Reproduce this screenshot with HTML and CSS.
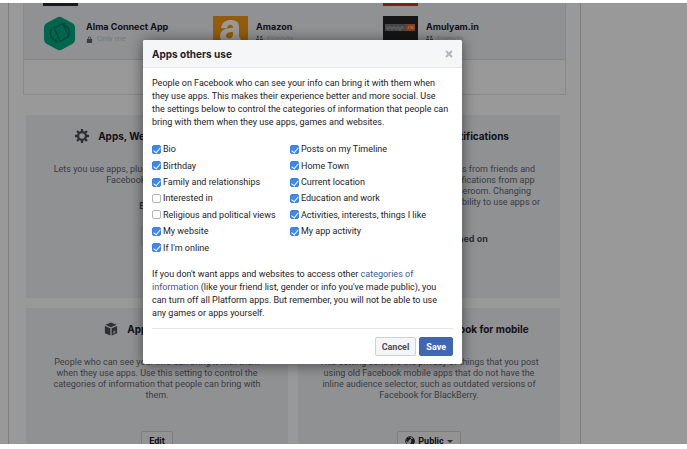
FILE: index.html
```
<!DOCTYPE html>
<html lang="en">
<head>
    <meta charset="utf-8">
    <title>App Settings</title>
    <link rel="stylesheet" href="styles.css">
</head>
<body>
    <div class="screen">
        <main class="page">
            <section class="panel">
                <div class="apps">
                    <div class="app"><span class="thumb dark"></span></div>
                    <div class="app"></div>
                    <div class="app"><span class="thumb red"></span></div>
                    <div class="app">
                        <svg class="thumb" viewBox="0 0 35 36">
                            <path d="M14 1.5Q16.500 0 19 1.500L30 7.500Q32.500 9 32.500 12V24Q32.500 27 30 28.500L19 34.500Q16.500 36 14 34.500L3 28.500Q.5 27 .5 24V12Q.5 9 3 7.500Z" fill="#00a880"/>
                            <g fill="none" stroke="#087563" stroke-width="1.300" stroke-linejoin="round">
                                <path d="M11 12l9-4 6 13-9 5z"/>
                                <path d="M8 13c-2 4-1 9 3 12l3 1M12 24l2 2-2 2M25 22c3-4 2-9-2-12l-2-1M22 7l-2 2 2 2"/>
                            </g>
                        </svg>
                        <div>
                            <a class="app-name" href="#">Alma Connect App</a>
                            <div class="audience">
                                <svg class="small-icon" viewBox="0 0 8 8"><path d="M1 3.500h6V8H1zM2 4V2.500a2 2 0 0 1 4 0V4H5V2.500a1 1 0 0 0-2 0V4z" fill="#62666f"/></svg>
                                Only me
                            </div>
                        </div>
                    </div>
                    <div class="app">
                        <svg class="thumb" viewBox="0 0 35 35">
                            <path d="M0 0h35v35H0z" fill="#f59a12"/>
                            <path d="M8 12c1-6 5-8 10-8 6 0 8 3 8 7v8c0 3 1 3 2 4l-4 4-3-3c-5 5-14 3-14-4 0-6 6-8 13-8 0-5-6-4-6 .5z" fill="#fff"/>
                            <path d="M20 16c-5 0-7 1-7 4s6 4 7-1z" fill="#f59a12"/>
                            <path d="M6 28q11 6 22 0" fill="none" stroke="#fff" stroke-width="2"/>
                        </svg>
                        <div>
                            <a class="app-name" href="#">Amazon</a>
                            <div class="audience">
                                <svg class="small-icon" viewBox="0 0 8 8"><path d="M1 0h2v2H1zM5 0h2v2H5zM0 3h3.500v3H3v2H1V6H0zM4.500 3H8v3H7v2H5V6h-.5z" fill="#62666f"/></svg>
                                Friends
                            </div>
                        </div>
                    </div>
                    <div class="app">
                        <svg class="thumb" viewBox="0 0 35 35">
                            <path d="M0 0h35v35H0z" fill="#262626"/>
                            <path d="M2 8h21v7H2z" fill="#77777a"/>
                            <path d="M4 10v3h2v-2h2v2h2v-2h2v2h2v-2h2v3h2v-3h2v2" fill="none" stroke="#aaa"/>
                            <path d="M23 8h9v7h-9z" fill="#e06a2c"/>
                            <path d="M25 13l1-3M28 13v-3l2 3v-3" fill="none" stroke="#ffc19a"/>
                        </svg>
                        <div>
                            <a class="app-name" href="#">Amulyam.in</a>
                            <div class="audience">
                                <svg class="small-icon" viewBox="0 0 8 8"><path d="M1 0h2v2H1zM5 0h2v2H5zM0 3h3.500v3H3v2H1V6H0zM4.500 3H8v3H7v2H5V6h-.5z" fill="#62666f"/></svg>
                                Friends
                            </div>
                        </div>
                    </div>
                </div>
                <div class="show-all"></div>
            </section>

            <section class="cards">
                <article class="card">
                    <h3>
                        <svg class="card-icon" viewBox="0 0 16 16">
                            <path d="M8 0v16M0 8h16M2.300 2.300l11.400 11.400M13.700 2.300L2.300 13.700" stroke="#4b4f56" stroke-width="2.600"/>
                            <circle cx="8" cy="8" r="4.500" fill="#f1f2f5" stroke="#4b4f56" stroke-width="2.600"/>
                        </svg>
                        Apps, Websites and Plug-ins
                    </h3>
                    <p>Lets you use apps, plug-ins, games and websites on<br>Facebook and elsewhere.</p>
                    <strong>Enabled</strong>
                    <button class="btn" type="button">Edit</button>
                </article>
                <article class="card">
                    <h3>
                        <svg class="card-icon" viewBox="0 0 16 16">
                            <circle cx="8" cy="8" r="7" fill="#4b4f56"/>
                        </svg>
                        Game and App Notifications
                    </h3>
                    <p>This setting controls game requests from friends and<br>game status updates, and app notifications from app<br>developers on Facebook and Gameroom. Changing<br>these settings will not impact your ability to use apps or<br>play games.</p>
                    <strong>Notifications are turned on</strong>
                    <button class="btn" type="button">Edit</button>
                </article>
                <article class="card">
                    <h3>
                        <svg class="card-icon" viewBox="0 0 16 16">
                            <path d="M8 .5l6.500 2.700L8 6 1.500 3.200zM1 4.500l6.300 2.700v8.300L1 12.800zM15 4.500L8.700 7.200v8.300l6.300-2.700z" fill="#4b4f56"/>
                            <path d="M10.500 10.500l2.500-1v3l-2.500 1z" fill="#b9bcc2"/>
                        </svg>
                        Apps Others Use
                    </h3>
                    <p>People who can see your info can bring it with them<br>when they use apps. Use this setting to control the<br>categories of information that people can bring with<br>them.</p>
                    <button class="btn" type="button">Edit</button>
                </article>
                <article class="card">
                    <h3>
                        <svg class="card-icon" viewBox="0 0 16 16">
                            <rect x="4" y="1" width="8" height="14" rx="1" fill="#4b4f56"/>
                        </svg>
                        Old Versions of Facebook for mobile
                    </h3>
                    <p>This setting controls the privacy of things that you post<br>using old Facebook mobile apps that do not have the<br>inline audience selector, such as outdated versions of<br>Facebook for BlackBerry.</p>
                    <button class="btn" type="button">
                        <svg class="globe" viewBox="0 0 10 10">
                            <circle cx="5" cy="5" r="4.400" fill="#d5d7da" stroke="#4b4f56"/>
                            <path d="M1 5l1-3 3-1 1 1.500-2 1.500-1 2zM6 3l3-.5.5 4L7 9.500 4 9l2-2 .5-2z" fill="#25282d"/>
                        </svg>
                        Public
                        <span class="caret"></span>
                    </button>
                </article>
            </section>
        </main>

        <div class="overlay">
            <form class="modal" role="dialog" aria-labelledby="modal-title">
                <header>
                    <h2 id="modal-title">Apps others use</h2>
                    <button class="close" type="button" aria-label="Close">
                        <svg viewBox="0 0 8 8"><path d="M1 1l6 6M7 1L1 7" stroke="#b4b7bd" stroke-width="2"/></svg>
                    </button>
                </header>
                <div class="modal-body">
                    <p>People on Facebook who can see your info can bring it with them when<br>they use apps. This makes their experience better and more social. Use<br>the settings below to control the categories of information that people can<br>bring with them when they use apps, games and websites.</p>
                    <div class="options">
                        <label><input type="checkbox" checked>Bio</label>
                        <label><input type="checkbox" checked>Birthday</label>
                        <label><input type="checkbox" checked>Family and relationships</label>
                        <label><input type="checkbox">Interested in</label>
                        <label><input type="checkbox">Religious and political views</label>
                        <label><input type="checkbox" checked>My website</label>
                        <label><input type="checkbox" checked>If I'm online</label>
                        <label><input type="checkbox" checked>Posts on my Timeline</label>
                        <label><input type="checkbox" checked>Home Town</label>
                        <label><input type="checkbox" checked>Current location</label>
                        <label><input type="checkbox" checked>Education and work</label>
                        <label><input type="checkbox" checked>Activities, interests, things I like</label>
                        <label><input type="checkbox" checked>My app activity</label>
                    </div>
                    <p>If you don't want apps and websites to access other <a href="#">categories of<br>information</a> (like your friend list, gender or info you've made public), you<br>can turn off all Platform apps. But remember, you will not be able to use<br>any games or apps yourself.</p>
                </div>
                <footer>
                    <button class="btn" type="button">Cancel</button>
                    <button class="btn save" type="submit">Save</button>
                </footer>
            </form>
        </div>
    </div>
</body>
</html>
```
FILE: styles.css
```
* {
    box-sizing: border-box;
}
body {
    margin: 0;
    background: #fff;
    font-family: Roboto, "Liberation Sans", sans-serif;
    font-size: 9px;
    color: #1d2129;
}
h2, h3, p {
    margin: 0;
}
a {
    color: #385898;
    text-decoration: none;
}
.screen {
    position: relative;
    height: calc(100vh - 8px);
    margin-top: 3px;
    overflow: hidden;
}
.page {
    max-width: 573px;
    margin-left: 8px;
    padding: 0 14px;
    border: solid #d0d1d4;
    border-width: 0 1px;
}

/* list of apps */
.panel {
    border: 1px solid #e4e5e8;
    border-top: none;
}
.apps {
    display: grid;
    grid-template-columns: repeat(3, 1fr);
    align-content: end;
    gap: 10px 0;
    height: 57px;
    padding: 0 12px 8px 19px;
    background: #f1f2f5;
    border-bottom: 1px solid #e0e2e5;
    overflow: hidden;
}
.app {
    display: flex;
    gap: 8px;
    height: 35px;
}
.thumb {
    width: 35px;
    height: 35px;
}
.dark {
    background: #2b2c33;
}
.red {
    background: #d8341c;
}
.app-name {
    display: block;
    padding-top: 5px;
    line-height: 12px;
    font-family: Inter, "Liberation Sans", sans-serif;
    font-weight: 700;
    color: #1d2129;
}
.audience {
    display: flex;
    align-items: center;
    gap: 4px;
    line-height: 12px;
    font-size: 8px;
    color: #c8cad0;
}
.small-icon {
    width: 7px;
    height: 7px;
}
.show-all {
    height: 34px;
}

/* setting cards */
.cards {
    display: grid;
    grid-template-columns: 1fr 1fr;
    gap: 10px;
    margin: 20px 6px 0 3px;
}
.card {
    display: flex;
    flex-direction: column;
    align-items: center;
    padding: 13px 8px 19px;
    background: #f1f2f5;
    text-align: center;
    color: #616770;
}
.card h3 {
    display: flex;
    align-items: center;
    gap: 9px;
    margin-bottom: 20px;
    line-height: 16px;
    font-family: Inter, "Liberation Sans", sans-serif;
    font-size: 10px;
    color: #1d2129;
}
.card-icon {
    width: 14px;
    height: 14px;
}
.card p {
    line-height: 11px;
    white-space: nowrap;
}
.card strong {
    margin: 14px 0 -16px;
    line-height: 12px;
    font-family: Inter, "Liberation Sans", sans-serif;
    color: #4b4f56;
}
.card .btn {
    height: 20px;
    margin-top: 30px;
}
.btn {
    display: flex;
    align-items: center;
    gap: 3px;
    height: 19px;
    padding: 0 6px;
    border: 1px solid #ced0d4;
    border-radius: 2px;
    background: #f5f6f7;
    font: 700 9px Roboto, "Liberation Sans", sans-serif;
    color: #4b4f56;
}
.card .btn {
    padding: 0 7px;
    color: #1d2129;
}
.globe {
    width: 10px;
    height: 10px;
}
.caret {
    border: 3px solid transparent;
    border-top-color: #4b4f56;
    border-bottom: none;
}

/* dialog */
.overlay {
    position: absolute;
    inset: 0;
    padding: 37px 0 0 143px;
    background: rgba(0, 0, 0, 0.4);
}
.modal {
    width: 319px;
    background: #fff;
    border-radius: 2px;
    box-shadow: 0 1px 14px rgba(0, 0, 0, 0.5);
    overflow: hidden;
}
.modal header {
    display: flex;
    align-items: center;
    justify-content: space-between;
    height: 28px;
    padding: 0 9px;
    background: #f5f6f7;
    border-bottom: 1px solid #e5e5e5;
}
.modal h2 {
    font-family: Inter, "Liberation Sans", sans-serif;
    font-size: 10px;
}
.close {
    display: flex;
    padding: 0;
    border: none;
    background: none;
}
.close svg {
    width: 8px;
    height: 8px;
}
.modal-body {
    padding: 9px 0 8px;
    margin: 0 9px;
    border-bottom: 1px solid #e5e5e5;
}
.modal p {
    line-height: 13px;
    white-space: nowrap;
}
.options {
    display: grid;
    grid-template-columns: 138px 1fr;
    grid-template-rows: repeat(7, 1fr);
    grid-auto-flow: column;
    height: 115px;
    margin: 12px 0;
}
.options label {
    display: flex;
    align-items: center;
    gap: 2px;
    white-space: nowrap;
}
.options input {
    appearance: none;
    display: flex;
    justify-content: center;
    width: 9px;
    height: 9px;
    margin: 0;
    border: 1px solid #b5b5b5;
    border-radius: 2px;
    background: #fff;
}
.options input:checked {
    border-color: #3a80e8;
    background: #3b87f3;
}
.options input:checked::after {
    content: "";
    width: 3px;
    height: 6px;
    border: solid #fff;
    border-width: 0 1px 1px 0;
    transform: rotate(40deg);
}
.modal footer {
    display: flex;
    justify-content: flex-end;
    gap: 3px;
    padding: 8px 9px;
}
.save {
    border-color: #4267b2;
    background: #4267b2;
    color: #fff;
}
```
